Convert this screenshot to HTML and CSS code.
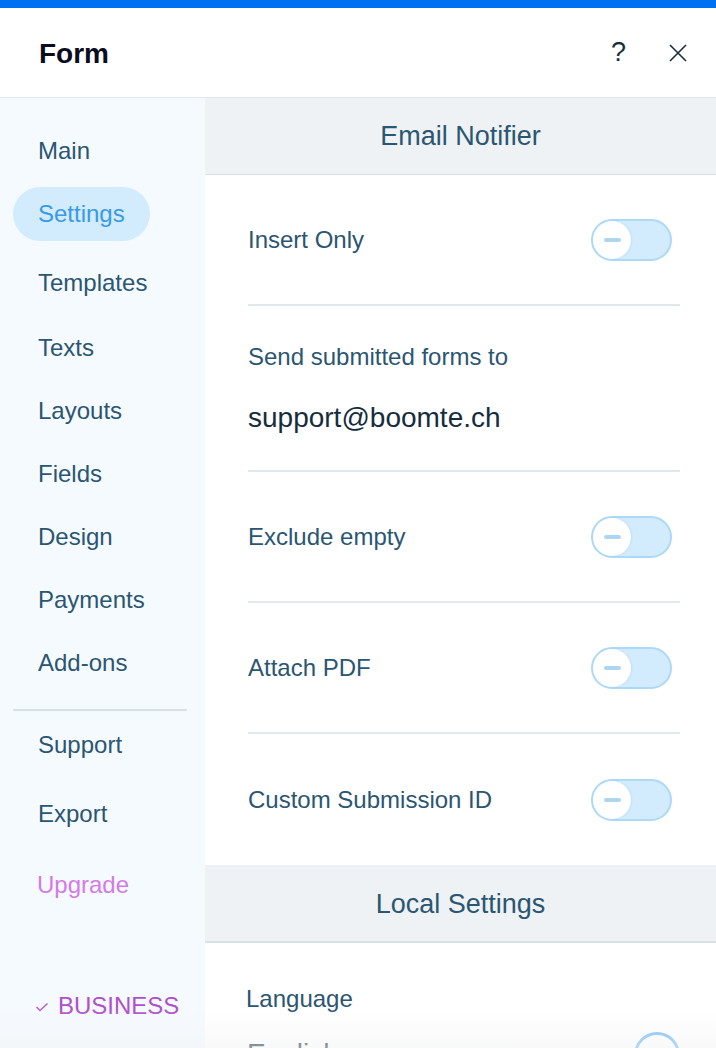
FILE: index.html
```html
<!DOCTYPE html>
<html lang="en">
<head>
<meta charset="utf-8">
<title>Form</title>
<link rel="stylesheet" href="styles.css">
</head>
<body>
<div class="app">
  <div class="topbar"></div>
  <header class="header">
    <h1 class="title">Form</h1>
    <div class="header-actions">
      <span class="help">?</span>
      <svg class="close" width="20" height="20" viewBox="0 0 20 20"><path d="M2 2 L18 18 M18 2 L2 18" stroke="#162d3d" stroke-width="1.6" fill="none"/></svg>
    </div>
  </header>
  <div class="body">
    <nav class="sidebar">
      <a class="nav-item">Main</a>
      <a class="nav-item active">Settings</a>
      <a class="nav-item tpl">Templates</a>
      <a class="nav-item">Texts</a>
      <a class="nav-item">Layouts</a>
      <a class="nav-item">Fields</a>
      <a class="nav-item">Design</a>
      <a class="nav-item">Payments</a>
      <a class="nav-item">Add-ons</a>
      <div class="nav-divider"></div>
      <a class="nav-item support">Support</a>
      <a class="nav-item export">Export</a>
      <a class="nav-item upgrade">Upgrade</a>
      <div class="plan">
        <svg class="check" width="14" height="10" viewBox="0 0 14 10"><path d="M1.5 5 L5 8.5 L12.5 1.5" stroke="#b45fd0" stroke-width="1.5" fill="none"/></svg>
        <span>BUSINESS</span>
      </div>
    </nav>
    <main class="content">
      <div class="section-head">Email Notifier</div>
      <div class="rows">
        <div class="row">
          <span class="label">Insert Only</span>
          <span class="toggle"><span class="knob"></span></span>
        </div>
        <div class="row stacked">
          <span class="label">Send submitted forms to</span>
          <span class="value">support@boomte.ch</span>
        </div>
        <div class="row">
          <span class="label">Exclude empty</span>
          <span class="toggle"><span class="knob"></span></span>
        </div>
        <div class="row">
          <span class="label">Attach PDF</span>
          <span class="toggle"><span class="knob"></span></span>
        </div>
        <div class="row last">
          <span class="label">Custom Submission ID</span>
          <span class="toggle"><span class="knob"></span></span>
        </div>
      </div>
      <div class="section-head local">Local Settings</div>
      <div class="lang">
        <span class="label">Language</span>
        <div class="lang-row">
          <span class="value">English</span>
          <span class="radio"></span>
        </div>
      </div>
    </main>
  </div>
  <div class="fade"></div>
</div>
</body>
</html>
```
FILE: styles.css
```css
* { box-sizing: border-box; }
html, body { margin: 0; padding: 0; }
body {
  font-family: "Liberation Sans", Arial, sans-serif;
  background: #fff;
  color: #2b5672;
}
.app {
  position: relative;
  width: 716px;
  height: 1048px;
  overflow: hidden;
  display: flex;
  flex-direction: column;
}
.topbar { height: 8px; background: #0070f3; flex: none; }
.header {
  height: 90px;
  flex: none;
  display: flex;
  align-items: center;
  justify-content: space-between;
  padding: 0 28px 0 39px;
  border-bottom: 1px solid #e2e7ec;
}
.title {
  margin: 0;
  font-size: 28px;
  font-weight: bold;
  color: #0b0b1e;
  padding-top: 2px;
}
.header-actions { display: flex; align-items: center; gap: 42px; }
.help {
  font-size: 27px;
  color: #162d3d;
  line-height: 1;
  font-weight: normal;
}
.close { display: block; }

.body { flex: 1; display: flex; min-height: 0; }
.sidebar {
  width: 205px;
  flex: none;
  background: #f5faff;
  display: flex;
  flex-direction: column;
  align-items: flex-start;
  padding-top: 26px;
}
.nav-item {
  display: block;
  height: 54px;
  line-height: 54px;
  margin-left: 13px;
  padding: 0 25px;
  border-radius: 27px;
  font-size: 24px;
  color: #2b5672;
  margin-bottom: 9px;
}
.nav-item.active { background: #d3ecfd; color: #3899ec; margin-bottom: 15px; }
.nav-item.tpl { margin-bottom: 11px; }
.nav-divider {
  width: 174px;
  height: 2px;
  background: #d9e1e8;
  margin: 10px 0 0 13px;
}
.nav-item.support { margin-top: 7px; margin-bottom: 15px; }
.nav-item.export { margin-bottom: 17px; }
.nav-item.upgrade { color: #d47ae9; margin-left: 12px; }
.plan {
  margin: 58px 0 0 35px;
  display: flex;
  align-items: center;
  gap: 9px;
  font-size: 24px;
  color: #b04fcb;
  height: 54px;
}
.check { display: block; margin-top: 2px; }

.content { flex: 1; display: flex; flex-direction: column; }
.section-head {
  height: 77px;
  flex: none;
  background: #eef2f5;
  border-bottom: 1px solid #d9e1e8;
  display: flex;
  align-items: center;
  justify-content: center;
  font-size: 27px;
  color: #2b5672;
}
.section-head.local { height: 78px; border-bottom: 2px solid #d9e1e8; padding-top: 2px; }
.rows { padding: 0 36px 0 43px; }
.row {
  height: 131px;
  display: flex;
  align-items: center;
  justify-content: space-between;
  border-bottom: 2px solid #e1e8ee;
}
.row.stacked {
  height: 166px;
  flex-direction: column;
  align-items: flex-start;
  justify-content: flex-start;
  padding-top: 37px;
}
.row.last { border-bottom: none; height: 131px; }
.label { font-size: 24px; color: #2b5672; }
.value { font-size: 28px; color: #162d3d; }
.row.stacked .value { margin-top: 31px; }
.toggle {
  position: relative;
  width: 81px;
  height: 42px;
  border-radius: 21px;
  background: #d3ecfd;
  border: 2px solid #acd9f8;
  flex: none;
  margin-right: 8px;
}
.knob {
  position: absolute;
  left: 0;
  top: 0;
  width: 38px;
  height: 38px;
  border-radius: 50%;
  background: #fff;
  box-shadow: 1px 0 2px rgba(90, 150, 200, 0.15);
}
.knob::after {
  content: "";
  position: absolute;
  left: 11px;
  top: 17px;
  width: 17px;
  height: 4px;
  border-radius: 2px;
  background: #acd6f4;
}
.lang { padding: 42px 36px 0 41px; }
.lang-row {
  display: flex;
  justify-content: space-between;
  align-items: flex-start;
  margin-top: 25px;
}
.lang-row .value { margin-left: 1px; }
.radio {
  width: 46px;
  height: 46px;
  border-radius: 50%;
  border: 3px solid #6fb9f0;
  margin-top: -6px;
}
.fade {
  position: absolute;
  left: 0;
  right: 0;
  bottom: 0;
  height: 40px;
  background: linear-gradient(to bottom, rgba(255,255,255,0), rgba(243,244,245,0.55));
  pointer-events: none;
}
```
